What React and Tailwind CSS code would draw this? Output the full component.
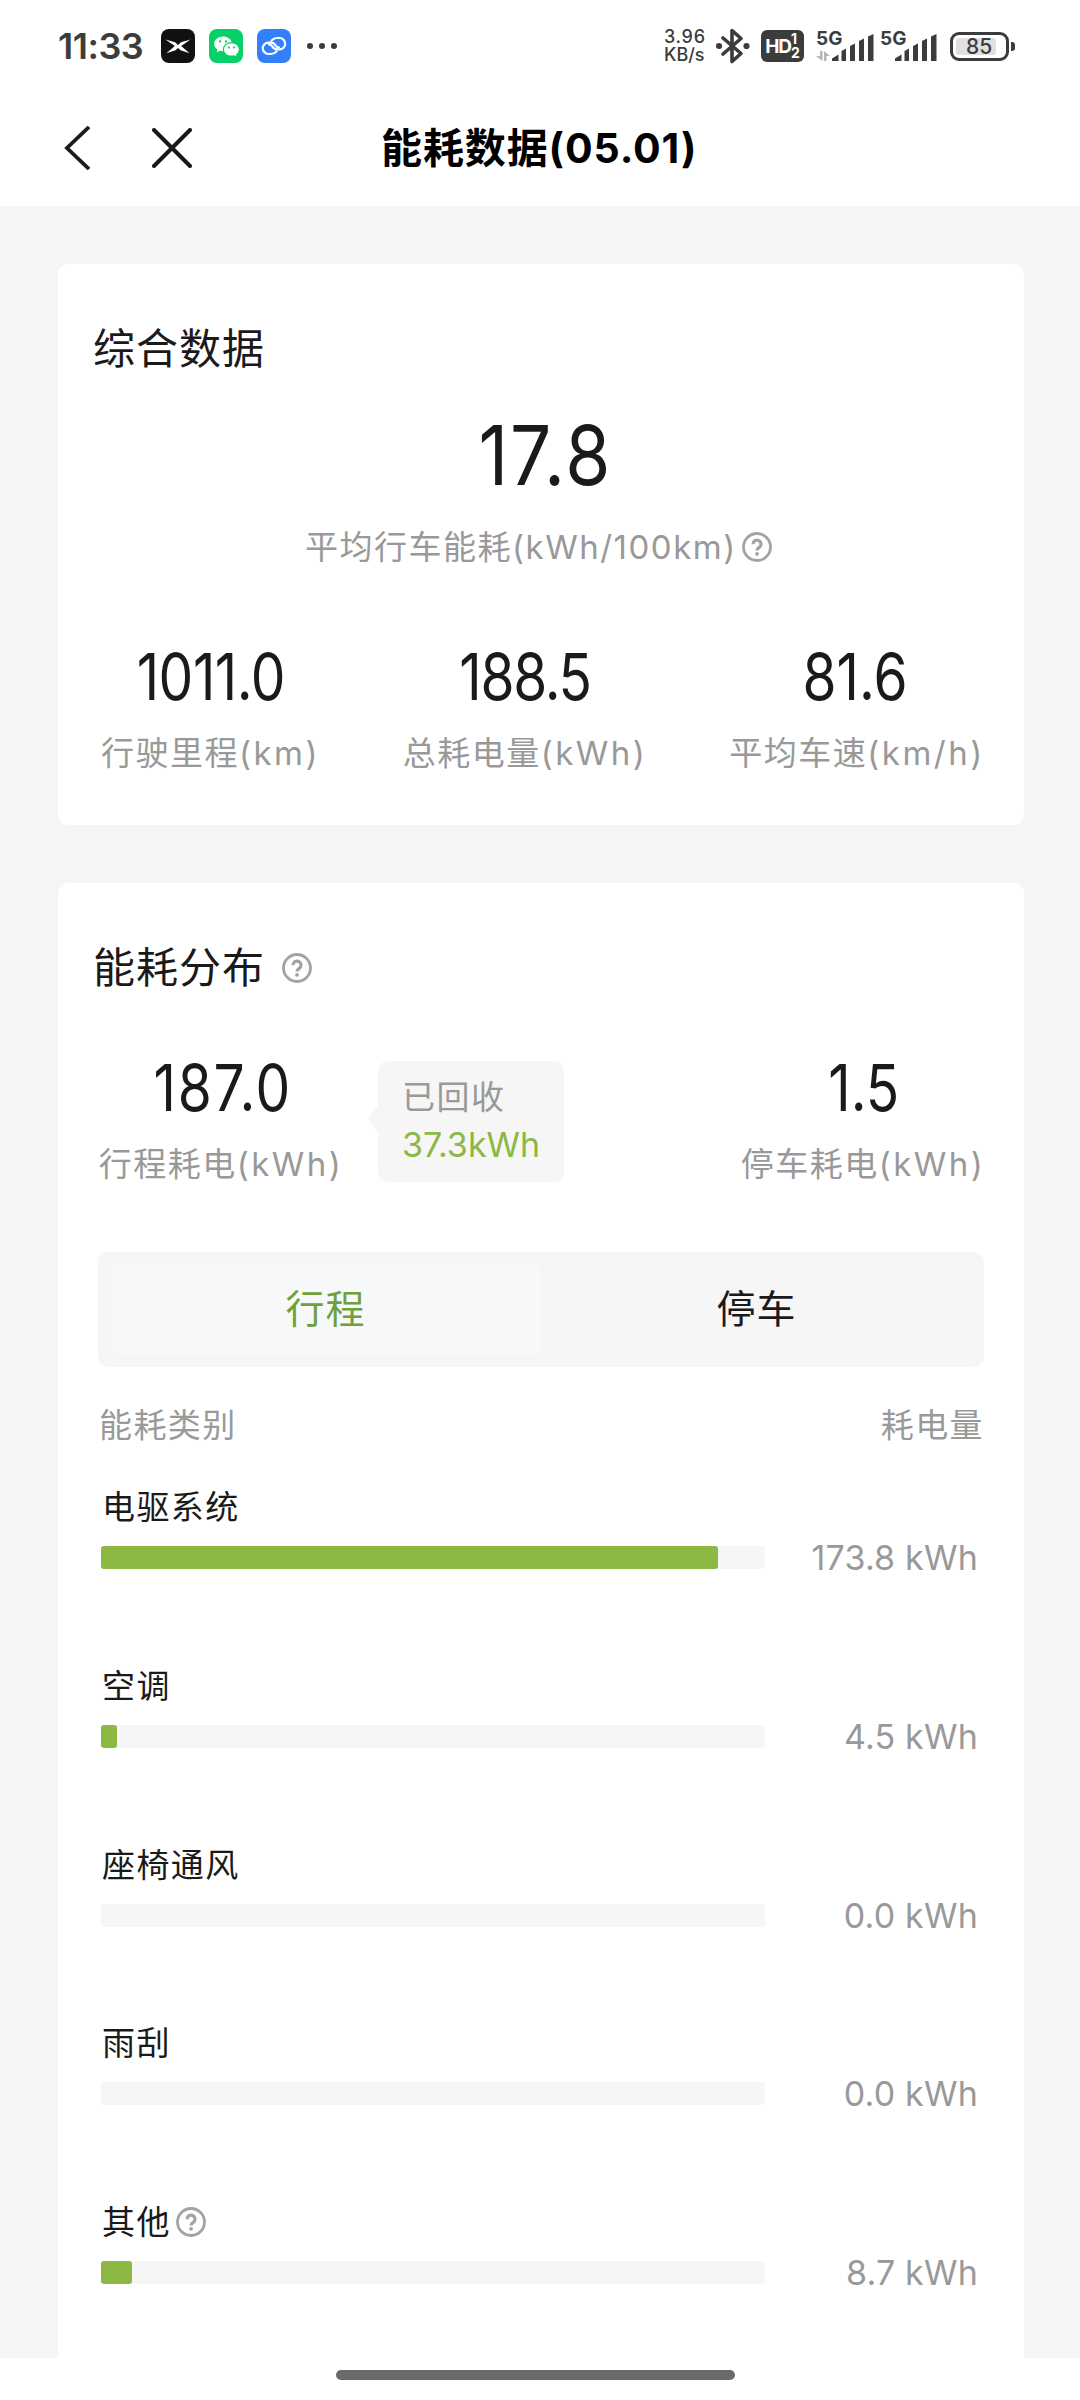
import React, { useState } from 'react';
import { RiWechatFill } from 'react-icons/ri';

const TRIP_TOTAL = 187.0;

const ROWS = [
  { name: '电驱系统', value: 173.8 },
  { name: '空调', value: 4.5 },
  { name: '座椅通风', value: 0 },
  { name: '雨刮', value: 0 },
  { name: '其他', value: 8.7, help: true },
];

const TABS = [
  { id: 'trip', label: '行程' },
  { id: 'park', label: '停车' },
];

function HelpIcon({ className = '' }) {
  return (
    <svg viewBox="0 0 30 30" className={`w-[30px] h-[30px] shrink-0 ${className}`} fill="none" stroke="#a3a3a3">
      <circle cx="15" cy="15" r="13.5" strokeWidth="2.8" />
      <path d="M11 12.2a4 4 0 1 1 6.200 3.200c-1.500 1-2.200 1.600-2.200 3.200" strokeWidth="3.200" />
      <circle cx="15" cy="21.800" r="1.900" fill="#a3a3a3" stroke="none" />
    </svg>
  );
}

function Signal() {
  return (
    <svg viewBox="0 0 42 27" className="w-[42px] h-[27px]" fill="#3c3c3c">
      <path d="M0 27v-2.500L6.500 20.500V27z" />
      <path d="M9.500 27V17l4.500-2.500V27z" />
      <path d="M18 27V12l5-2.500V27z" />
      <path d="M27 27V7l5-2.500V27z" />
      <path d="M36 27V2.500L41.500 0V27z" />
    </svg>
  );
}

function StatusBar() {
  return (
    <div className="h-[92px] pl-[58px] pr-[65px] flex items-center text-[#3c3c3c]">
      <span className="w-[103px] text-[36px] leading-[36px] font-semibold tracking-[-0.5px] whitespace-nowrap">11:33</span>
      <div className="flex gap-[14px]">
        <div className="w-[34px] h-[34px] rounded-[8px] bg-[#111]">
          <svg viewBox="0 0 34 34" fill="#fff">
            <path d="M4.500 10.500l9.500 2.700 3 2.800 3-2.800 9.500-2.700-9 6.200v.600l8 7-9-3.100-2.500-2.200-2.500 2.200-9 3.100 8-7v-.600z" />
          </svg>
        </div>
        <div className="w-[34px] h-[34px] rounded-[8px] bg-[#06d167] flex items-center justify-center">
          <RiWechatFill className="w-[27px] h-[27px] text-white" />
        </div>
        <div className="w-[34px] h-[34px] rounded-[8px] bg-[#3380fb]">
          <svg viewBox="0 0 34 34" fill="none" stroke="#fff" strokeWidth="2.200" strokeLinecap="round">
            <path d="M19.500 22.500Q17 25 14 25h-2.500a5.700 5.700 0 0 1 0-11.400H14c2.500 0 3.500 1.200 4.500 2.700s2 2.200 3.500 2.200" />
            <path d="M14.500 11.500Q17 9 20 9h2.500a5.700 5.700 0 0 1 0 11.400H20c-2.500 0-3.500-1.200-4.500-2.700S13.500 15.500 12 15.500" />
          </svg>
        </div>
      </div>
      <div className="ml-[16px] flex gap-[6px]">
        <i className="w-[6px] h-[6px] rounded-full bg-[#3c3c3c]" />
        <i className="w-[6px] h-[6px] rounded-full bg-[#3c3c3c]" />
        <i className="w-[6px] h-[6px] rounded-full bg-[#3c3c3c]" />
      </div>

      <div className="ml-auto flex items-center">
        <div className="w-[52px] text-[18px] leading-[18px] font-medium whitespace-nowrap">
          <div className="tracking-[0.7px]">3.96</div>
          <div>KB/s</div>
        </div>
        <svg viewBox="0 0 34 36" className="w-[34px] h-[36px]" fill="none" stroke="#3c3c3c" strokeWidth="3.600" strokeLinejoin="round" strokeLinecap="round">
          <path d="M7 10l18 15.500-9 8V2.500l9 8L7 26" />
          <circle cx="3" cy="18" r="1.300" fill="#3c3c3c" />
          <circle cx="30.500" cy="18" r="1.300" fill="#3c3c3c" />
        </svg>
        <div className="ml-[11px] w-[43px] h-[32px] rounded-[6px] bg-[#3c3c3c] text-white flex items-center justify-center font-bold">
          <span className="text-[19px] leading-none tracking-[-1px]">HD</span>
          <span className="text-[14px] leading-[14px]">
            <span className="block">1</span>
            <span className="block">2</span>
          </span>
        </div>
        <div className="ml-[12px] flex items-end">
          <div className="w-[16px] h-[30px] relative">
            <span className="absolute left-0 top-[-2px] text-[19px] leading-[19px] font-bold">5G</span>
            <svg viewBox="0 0 14 10" className="absolute left-0 bottom-0 w-[14px] h-[10px]" fill="#b5b5b5">
              <path d="M4 0h2.500v10L0 5h4zM8 0v10h2.500V5H14z" />
            </svg>
          </div>
          <Signal />
          <div className="ml-[6px] w-[15px] h-[30px] relative">
            <span className="absolute left-0 top-[-2px] text-[19px] leading-[19px] font-bold">5G</span>
          </div>
          <Signal />
        </div>
        <div className="ml-[13px] w-[59px] h-[29px] rounded-[9px] border-[3px] border-[#3c3c3c] p-[3px]">
          <div className="w-[40px] h-[17px] rounded-[3px] bg-[#e0e0e0] pl-[10px] text-[21px] leading-[17px] font-medium">85</div>
        </div>
        <div className="ml-[2px] w-[4px] h-[9px] rounded-r-[3px] bg-[#3c3c3c]" />
      </div>
    </div>
  );
}

function NavBar() {
  return (
    <div className="h-[114px] pb-[2px] pl-[64px] flex items-center">
      <svg viewBox="0 0 28 44" className="w-[28px] h-[44px]" fill="none" stroke="#1a1a1a" strokeWidth="3.800">
        <path d="M25 1L3 22l22 21" />
      </svg>
      <svg viewBox="0 0 40 40" className="ml-[60px] w-[40px] h-[40px]" fill="none" stroke="#1a1a1a" strokeWidth="4" strokeLinecap="round">
        <path d="M2 2l36 36M38 2L2 38" />
      </svg>
      <h1 className="ml-[189px] text-[41px] leading-[60px] font-bold text-black tracking-[0.9px] whitespace-nowrap">能耗数据(05.01)</h1>
    </div>
  );
}

function Stat({ value, label, unit, className, valueClass = '' }) {
  return (
    <div className={`flex flex-col items-center whitespace-nowrap ${className}`}>
      <span className={`text-[64px] leading-[60px] scale-x-[0.86] text-[#1a1a1a] ${valueClass}`}>{value}</span>
      <span className="mt-[28px] pl-[4px] text-[33px] leading-[36px] tracking-[1.500px] text-[#999]">
        {label}
        <span className="tracking-[2.500px]">({unit})</span>
      </span>
    </div>
  );
}

export default function App() {
  const [tab, setTab] = useState('trip');

  return (
    <div className="w-[1080px] h-[2400px] overflow-hidden bg-white flex flex-col font-['Inter','Noto_Sans_CJK_SC',sans-serif]">
      <StatusBar />
      <NavBar />

      <main className="h-[2152px] overflow-hidden bg-[#f5f5f5] pl-[58px] pr-[56px] pt-[58px]">
        {/* Summary */}
        <section className="h-[561px] rounded-[10px] bg-white pt-[55px]">
          <h2 className="pl-[35px] text-[42px] leading-[60px] tracking-[1px] text-[#1a1a1a]">综合数据</h2>
          <div className="mt-[36px] pl-[10px] text-center text-[83px] leading-[80px] scale-x-[0.88] tracking-[2px] text-[#1a1a1a]">17.8</div>
          <div className="mt-[34px] pl-[247px] flex items-center text-[#999]">
            <span className="w-[437px] text-[33px] leading-[36px] tracking-[1.500px] whitespace-nowrap">平均行车能耗(kWh/100km)</span>
            <HelpIcon />
          </div>
          <div className="mt-[82px] pl-[42px] pr-[43px] flex justify-between">
            <Stat value="1011.0" label="行驶里程" unit="km" className="w-[217px]" valueClass="pl-[6px] tracking-[-0.500px]" />
            <Stat value="188.5" label="总耗电量" unit="kWh" className="w-[240px]" valueClass="pl-[5px] tracking-[-1.500px]" />
            <Stat value="81.6" label="平均车速" unit="km/h" className="w-[252px]" />
          </div>
        </section>

        {/* Distribution */}
        <section className="mt-[58px] h-[1500px] rounded-[10px] bg-white pt-[55px]">
          <h2 className="pl-[35px] flex items-center text-[42px] leading-[60px] tracking-[1px] text-[#1a1a1a]">
            能耗分布
            <HelpIcon className="ml-[17px]" />
          </h2>
          <div className="mt-[60px] pl-[41px] pr-[43px] flex">
            <Stat value="187.0" label="行程耗电" unit="kWh" className="w-[240px]" valueClass="pl-[10px] tracking-[2px]" />
            <div className="ml-[29px] mt-[3px] flex">
              <svg viewBox="0 0 10 26" className="w-[10px] h-[26px] mt-[45px]" fill="#f6f6f6">
                <path d="M10 0v26L1 15q-1.500-2 0-4z" />
              </svg>
              <div className="w-[186px] h-[121px] rounded-[10px] bg-[#f6f6f6] pl-[24px] pt-[16px] whitespace-nowrap text-[33px] leading-[40px]">
                <div className="tracking-[1.500px] text-[#999]">已回收</div>
                <div className="mt-[8px] text-[34px] text-[#8cb843]">37.3kWh</div>
              </div>
            </div>
            <Stat value="1.5" label="停车耗电" unit="kWh" className="ml-auto w-[240px]" valueClass="pl-[7px]" />
          </div>

          <div className="mt-[70px] ml-[40px] w-[886px] h-[115px] rounded-[10px] bg-[#f6f6f6] p-[12px] grid grid-cols-2">
            {TABS.map((t) => (
              <button
                key={t.id}
                onClick={() => setTab(t.id)}
                className={`rounded-[8px] text-[39px] tracking-[1px] ${tab === t.id ? 'bg-[#f6f8f9] text-[#6fa03c]' : 'text-[#1a1a1a]'}`}
              >
                {t.label}
              </button>
            ))}
          </div>

          <div className="mt-[40px] pl-[41px] pr-[40px] flex justify-between text-[33px] leading-[36px] tracking-[1.400px] text-[#999]">
            <span>能耗类别</span>
            <span>耗电量</span>
          </div>

          <div className="mt-[46px] pl-[43px] pr-[46px]">
            {ROWS.map((row) => (
              <div key={row.name} className="h-[178.750px]">
                <div className="pl-[1px] flex items-center text-[33px] leading-[36px] tracking-[1.400px] text-[#1a1a1a]">
                  {row.name}
                  {row.help && <HelpIcon className="ml-[5px]" />}
                </div>
                <div className="mt-[16px] flex items-center justify-between">
                  <div className="w-[664px] h-[23px] my-[5px] rounded-[3px] bg-[#f6f6f6]">
                    <div className="h-full rounded-[3px] bg-[#8cb843]" style={{ width: `${(row.value / TRIP_TOTAL) * 100}%` }} />
                  </div>
                  <span className="text-[34px] leading-[33px] tracking-[0.200px] text-[#999]">{row.value.toFixed(1)} kWh</span>
                </div>
              </div>
            ))}
          </div>
        </section>
      </main>

      {/* Home indicator */}
      <div className="pt-[12px] flex justify-center pr-[9px]">
        <div className="w-[399px] h-[10px] rounded-full bg-[#6a6a6a]" />
      </div>
    </div>
  );
}
